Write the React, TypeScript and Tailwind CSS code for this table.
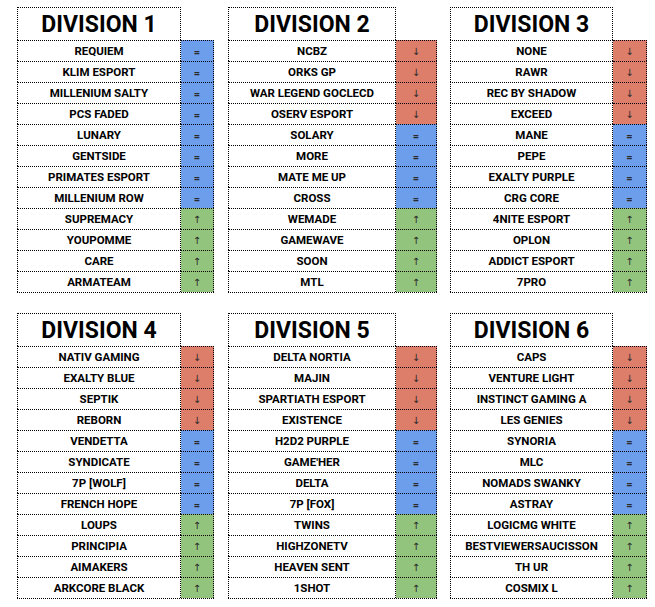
const colors: Record<string, string> = {
  '=': 'bg-[#6d9eeb]',
  '↑': 'bg-[#93c47d]',
  '↓': 'bg-[#dd7e6b]',
}

type Team = [string, string]

const divisions: { title: string; teams: Team[] }[] = [
  {
    title: 'DIVISION 1',
    teams: [
      ['REQUIEM', '='], ['KLIM ESPORT', '='], ['MILLENIUM SALTY', '='], ['PCS FADED', '='],
      ['LUNARY', '='], ['GENTSIDE', '='], ['PRIMATES ESPORT', '='], ['MILLENIUM ROW', '='],
      ['SUPREMACY', '↑'], ['YOUPOMME', '↑'], ['CARE', '↑'], ['ARMATEAM', '↑'],
    ],
  },
  {
    title: 'DIVISION 2',
    teams: [
      ['NCBZ', '↓'], ['ORKS GP', '↓'], ['WAR LEGEND GOCLECD', '↓'], ['OSERV ESPORT', '↓'],
      ['SOLARY', '='], ['MORE', '='], ['MATE ME UP', '='], ['CROSS', '='],
      ['WEMADE', '↑'], ['GAMEWAVE', '↑'], ['SOON', '↑'], ['MTL', '↑'],
    ],
  },
  {
    title: 'DIVISION 3',
    teams: [
      ['NONE', '↓'], ['RAWR', '↓'], ['REC BY SHADOW', '↓'], ['EXCEED', '↓'],
      ['MANE', '='], ['PEPE', '='], ['EXALTY PURPLE', '='], ['CRG CORE', '='],
      ['4NITE ESPORT', '↑'], ['OPLON', '↑'], ['ADDICT ESPORT', '↑'], ['7PRO', '↑'],
    ],
  },
  {
    title: 'DIVISION 4',
    teams: [
      ['NATIV GAMING', '↓'], ['EXALTY BLUE', '↓'], ['SEPTIK', '↓'], ['REBORN', '↓'],
      ['VENDETTA', '='], ['SYNDICATE', '='], ['7P [WOLF]', '='], ['FRENCH HOPE', '='],
      ['LOUPS', '↑'], ['PRINCIPIA', '↑'], ['AIMAKERS', '↑'], ['ARKCORE BLACK', '↑'],
    ],
  },
  {
    title: 'DIVISION 5',
    teams: [
      ['DELTA NORTIA', '↓'], ['MAJIN', '↓'], ['SPARTIATH ESPORT', '↓'], ['EXISTENCE', '↓'],
      ['H2D2 PURPLE', '='], ["GAME'HER", '='], ['DELTA', '='], ['7P [FOX]', '='],
      ['TWINS', '↑'], ['HIGHZONETV', '↑'], ['HEAVEN SENT', '↑'], ['1SHOT', '↑'],
    ],
  },
  {
    title: 'DIVISION 6',
    teams: [
      ['CAPS', '↓'], ['VENTURE LIGHT', '↓'], ['INSTINCT GAMING A', '↓'], ['LES GENIES', '↓'],
      ['SYNORIA', '='], ['MLC', '='], ['NOMADS SWANKY', '='], ['ASTRAY', '='],
      ['LOGICMG WHITE', '↑'], ['BESTVIEWERSAUCISSON', '↑'], ['TH UR', '↑'], ['COSMIX L', '↑'],
    ],
  },
]

// column widths per position (left / middle / right), like the sheet
const cols = [
  { name: 'w-[164px]', status: 'w-[33px]' },
  { name: 'w-[168px]', status: 'w-[41px]' },
  { name: 'w-[163px]', status: 'w-[34px]' },
]

function Division({ title, teams, col }: { title: string; teams: Team[]; col: number }) {
  const { name, status } = cols[col]
  return (
    <div className="flex flex-col w-fit">
      <div
        className={`${name} h-[33px] border-l border-t border-r border-dotted border-black flex items-center justify-center pt-[1px] text-[23px] font-bold leading-none text-black`}
      >
        {title}
      </div>
      <div className="border-b border-dotted border-black">
        {teams.map(([team, s]) => (
          <div key={team} className="flex h-[21px]">
            <div
              className={`${name} border-l border-t border-r border-dotted border-black flex items-center justify-center pt-[2px] text-[11.5px] leading-none font-bold text-black whitespace-nowrap`}
            >
              {team}
            </div>
            <div
              className={`${status} ${colors[s]} border-t border-r border-dotted border-black flex items-center justify-center pt-[2px] leading-none text-[#2a2a2a] ${
                s === '=' ? 'text-[11px] font-bold' : "text-[10px] font-['DejaVu_Sans',sans-serif]"
              }`}
            >
              {s}
            </div>
          </div>
        ))}
      </div>
    </div>
  )
}

export default function App() {
  const rows = [divisions.slice(0, 3), divisions.slice(3, 6)]
  return (
    <div className="min-h-screen bg-white pt-[7px] pl-[17px] font-['Roboto',sans-serif]">
      <div className="flex flex-col gap-[20px]">
        {rows.map((row, i) => (
          <div key={i} className="flex">
            {row.map((d, j) => (
              <div key={d.title} className={j === 0 ? '' : j === 1 ? 'ml-[14px]' : 'ml-[13px]'}>
                <Division title={d.title} teams={d.teams} col={j} />
              </div>
            ))}
          </div>
        ))}
      </div>
    </div>
  )
}
